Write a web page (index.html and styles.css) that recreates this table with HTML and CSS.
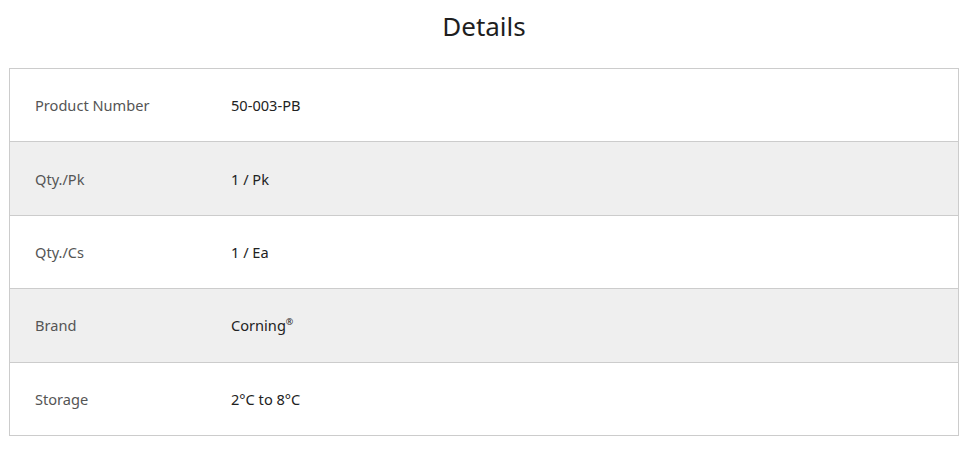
FILE: index.html
```html
<!DOCTYPE html>
<html lang="en">
<head>
<meta charset="utf-8">
<title>Details</title>
<link rel="stylesheet" href="styles.css">
</head>
<body>
<section class="details">
  <h2 class="details-title">Details</h2>
  <div class="details-table">
    <div class="row"><div class="label">Product Number</div><div class="value">50-003-PB</div></div>
    <div class="row alt"><div class="label">Qty./Pk</div><div class="value">1 / Pk</div></div>
    <div class="row"><div class="label">Qty./Cs</div><div class="value">1 / Ea</div></div>
    <div class="row alt"><div class="label">Brand</div><div class="value">Corning<sup class="reg">®</sup></div></div>
    <div class="row"><div class="label">Storage</div><div class="value">2°C to 8°C</div></div>
  </div>
</section>
</body>
</html>
```

FILE: styles.css
```css
html, body {
  margin: 0;
  padding: 0;
  background: #fff;
}
body {
  font-family: "Noto Sans", "Open Sans", sans-serif;
  color: #222;
}
.details {
  padding: 0 11px 0 9px;
}
.details-title {
  margin: 0;
  padding-top: 8px;
  height: 68px;
  box-sizing: border-box;
  text-align: center;
  font-weight: 400;
  font-size: 26px;
  line-height: 36px;
  color: #1e1e1e;
}
.details-table {
  border: 1px solid #cccccc;
}
.row {
  display: flex;
  align-items: center;
  height: 73.4px;
  box-sizing: border-box;
  border-top: 1px solid #cccccc;
  font-size: 14.6px;
}
.row:first-child {
  border-top: none;
  height: 72.4px;
}
.row.alt {
  background: #efefef;
}
.label {
  width: 196px;
  padding-left: 25px;
  color: #555;
}
.value {
  color: #222;
}
.reg {
  font-size: 9px;
  vertical-align: 6px;
  line-height: 0;
}
```
